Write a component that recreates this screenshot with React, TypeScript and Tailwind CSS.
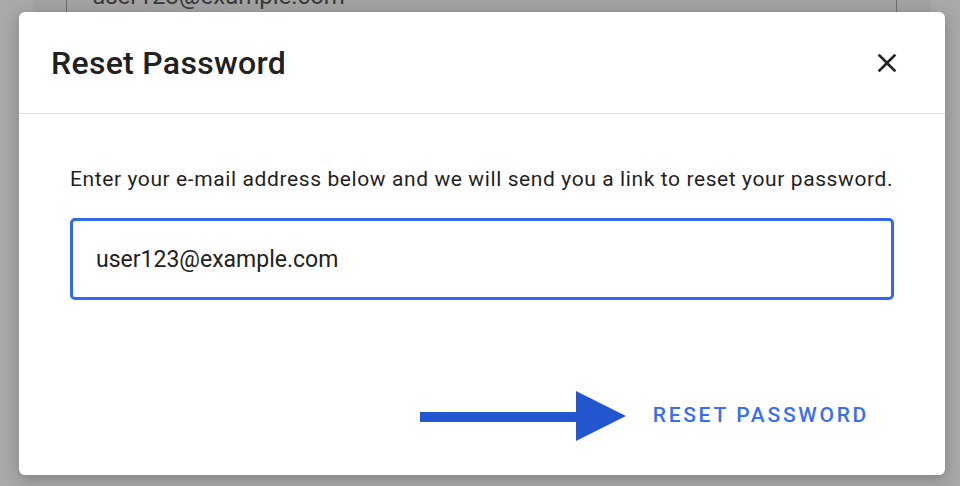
import React from 'react';

function CloseIcon() {
  return (
    <svg viewBox="0 0 24 24" className="h-8 w-8" fill="#222222">
      <path d="M19 6.41L17.59 5 12 10.59 6.41 5 5 6.41 10.59 12 5 17.59 6.41 19 12 13.41 17.59 19 19 17.59 13.41 12z" />
    </svg>
  );
}

function Arrow() {
  return (
    <svg width="206" height="50" viewBox="0 0 206 50" className="shrink-0">
      <rect x="0" y="21" width="160" height="10" fill="#2457cf" />
      <polygon points="156,0 206,25 156,50" fill="#2457cf" />
    </svg>
  );
}

export default function App() {
  return (
    <div className="relative h-[486px] w-[960px] overflow-hidden bg-[#a9a9a9] font-['Roboto',sans-serif]">
      {/* page behind the dialog */}
      <div className="ml-[33px] h-full w-[897px] bg-[#a3a3a3] px-[33px]">
        <div className="-mt-[34px] flex h-[60px] items-center border border-[#6e6e6e] px-[25px] text-[24px] text-[#3a3a3a]">
          user123@example.com
        </div>
      </div>

      {/* dialog */}
      <div className="absolute left-[19px] top-[12px] flex h-[463px] w-[926px] flex-col rounded-md bg-white shadow-[0_4px_16px_rgba(0,0,0,0.25)]">
        <div className="flex h-[102px] items-center justify-between border-b border-[#e0e0e0] pl-[32px] pr-[42px]">
          <h2 className="text-[32px] font-medium tracking-[0.3px] text-[#212121]">Reset Password</h2>
          <button className="flex items-center justify-center">
            <CloseIcon />
          </button>
        </div>

        <div className="px-[51px] pt-[51px]">
          <p className="text-[21px] leading-[28px] tracking-[0.6px] text-[#1f1f1f]">
            Enter your e-mail address below and we will send you a link to reset your password.
          </p>
          <div className="mt-[25px] flex h-[82px] items-center rounded-[5px] border-[3px] border-[#3268ea] px-[23px] pt-[3px] text-[23px] text-[#222222]">
            user123@example.com
          </div>
        </div>

        <div className="mt-[91px] flex h-[50px] items-center justify-end gap-[11px] pr-[60px]">
          <Arrow />
          <button className="px-4 text-[21px] font-medium uppercase tracking-[2.7px] text-[#3a6ef0]">
            Reset Password
          </button>
        </div>
      </div>
    </div>
  );
}
